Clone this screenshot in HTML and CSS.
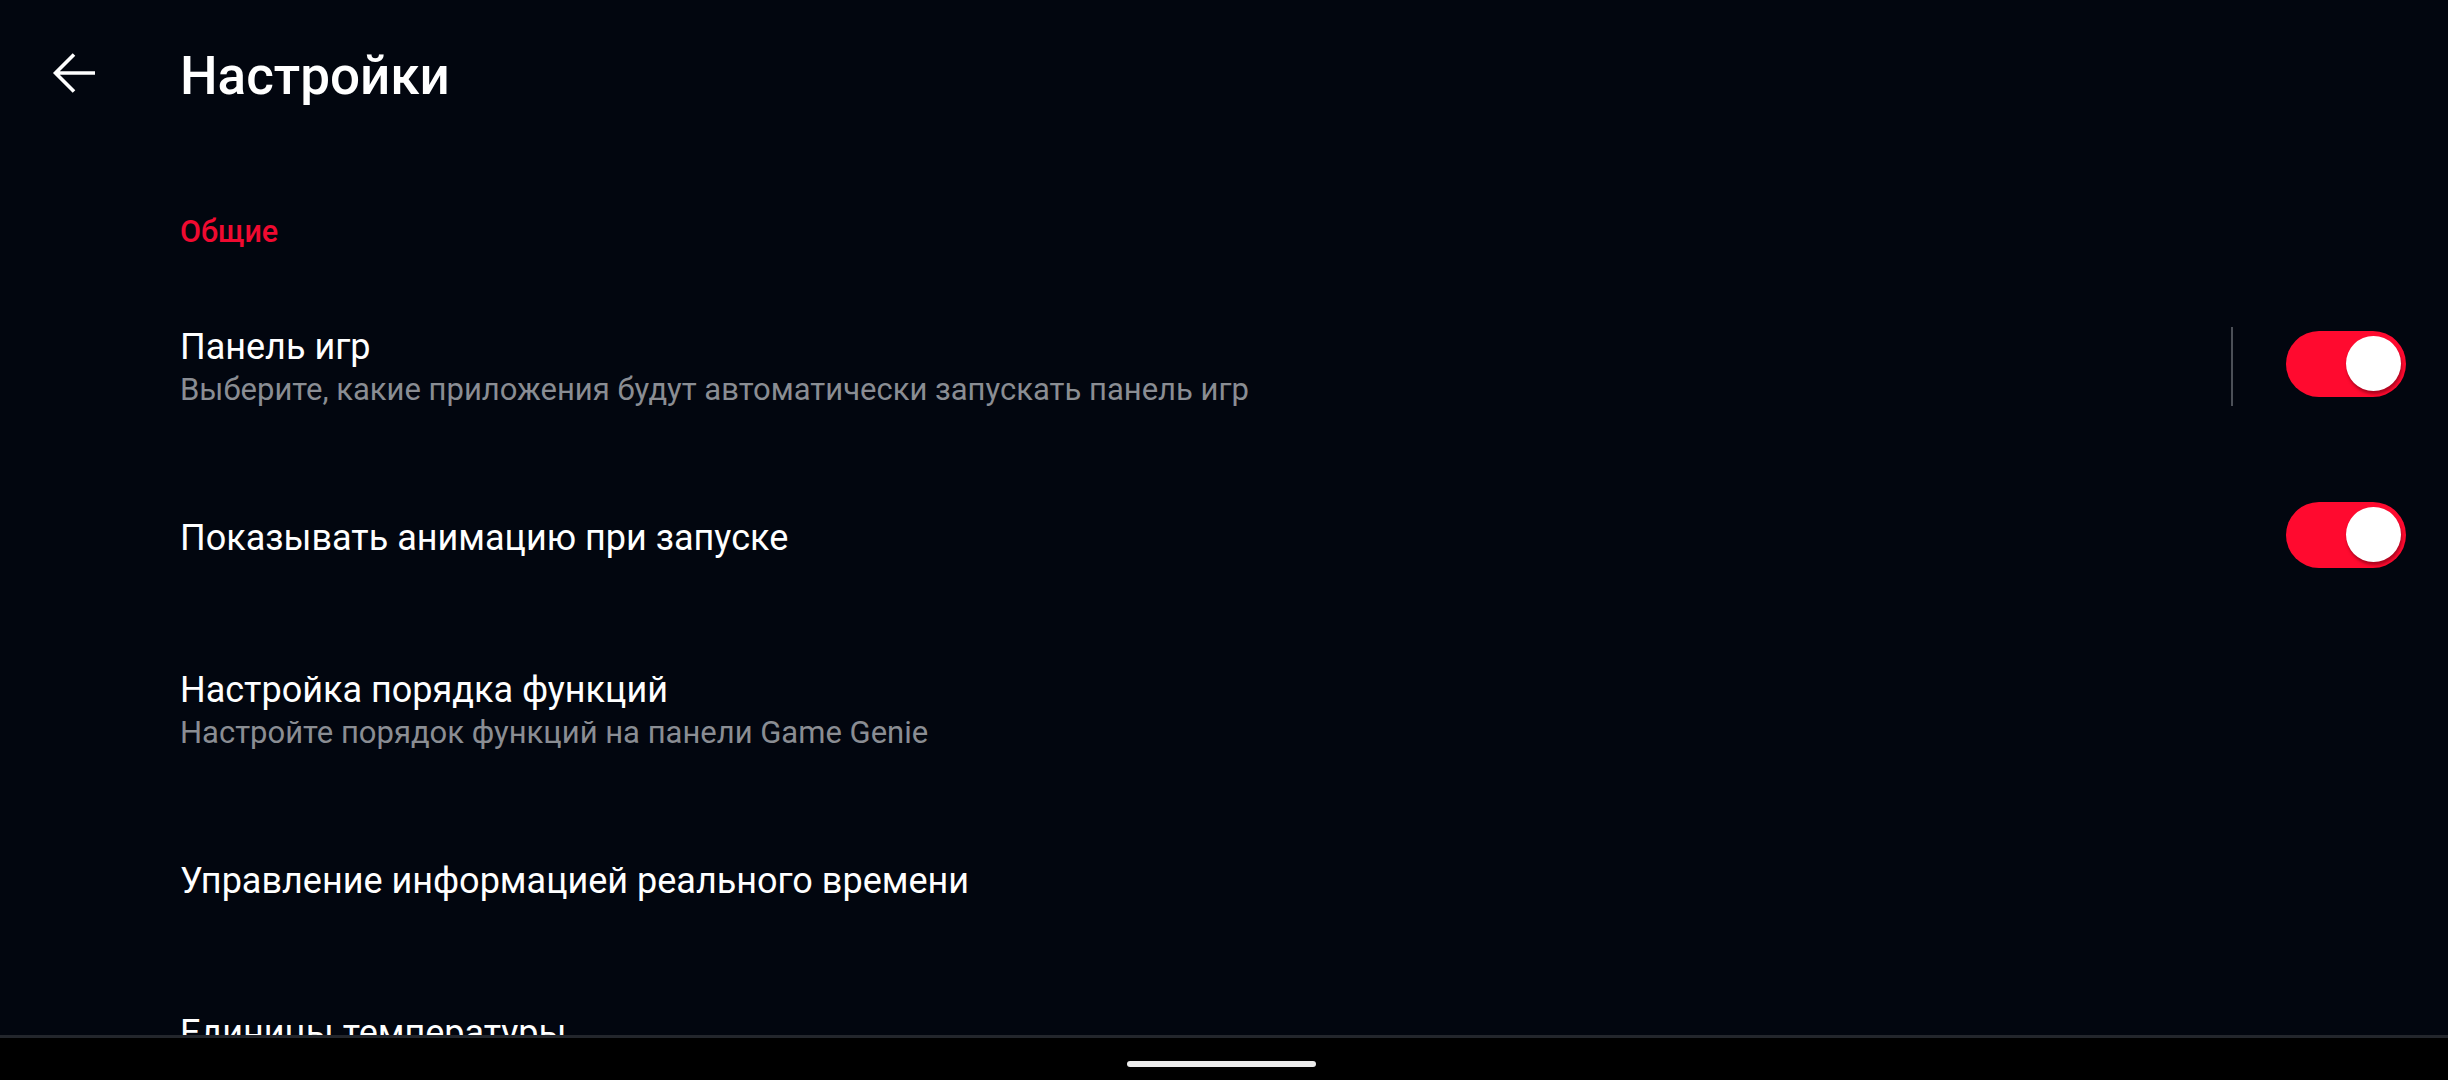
FILE: index.html
```html
<!DOCTYPE html>
<html lang="ru">
<head>
  <meta charset="UTF-8" />
  <meta name="viewport" content="width=device-width, initial-scale=1.0" />
  <title>Настройки</title>
  <link rel="stylesheet" href="styles.css">
</head>
<body>
  <div class="screen">
    <div class="content">
      <header class="toolbar">
        <button class="back-btn" aria-label="Назад">
          <svg width="44" height="44" viewBox="0 0 44 44">
            <path d="M43 22H4 M22 3.5 L3.5 22 L22 40.5" fill="none" stroke="#fff" stroke-width="3.6" />
          </svg>
        </button>
        <h1 class="title">Настройки</h1>
      </header>

      <div class="category">Общие</div>

      <div class="row">
        <div class="row-text">
          <div class="row-title">Панель игр</div>
          <div class="row-sub">Выберите, какие приложения будут автоматически запускать панель игр</div>
        </div>
        <div class="row-divider"></div>
        <div class="switch on"><span class="thumb"></span></div>
      </div>

      <div class="row">
        <div class="row-text">
          <div class="row-title">Показывать анимацию при запуске</div>
        </div>
        <div class="switch on"><span class="thumb"></span></div>
      </div>

      <div class="row">
        <div class="row-text">
          <div class="row-title">Настройка порядка функций</div>
          <div class="row-sub">Настройте порядок функций на панели Game Genie</div>
        </div>
      </div>

      <div class="row">
        <div class="row-text">
          <div class="row-title">Управление информацией реального времени</div>
        </div>
      </div>

      <div class="row">
        <div class="row-text">
          <div class="row-title">Единицы температуры</div>
          <div class="row-sub">Цельсий (°C)</div>
        </div>
      </div>
    </div>

    <div class="nav-bar">
      <div class="home-pill"></div>
    </div>
  </div>
</body>
</html>
```

FILE: styles.css
```css
body {
  margin: 0;
  padding: 0;
  background: #000;
  font-family: Roboto, "Noto Sans", Arial, sans-serif;
  color: #fff;
  overflow: hidden;
}

.screen {
  width: 2448px;
  height: 1080px;
  display: flex;
  flex-direction: column;
}

.content {
  height: 1035px;
  overflow: hidden;
  background: #02060f;
}

/* top bar */
.toolbar {
  height: 150px;
  display: flex;
  align-items: center;
  padding-left: 52px;
}

.back-btn {
  width: 44px;
  height: 44px;
  padding: 0;
  border: none;
  background: none;
  display: flex;
  margin-top: -4px;
}

.title {
  margin: 2px 0 0 84px;
  font-size: 53px;
  font-weight: 500;
  line-height: 64px;
}

/* list */
.category {
  padding: 62px 0 29px 180px;
  line-height: 40px;
  font-size: 30.5px;
  font-weight: 500;
  color: #f00a30;
}

.row {
  height: 171.5px;
  display: flex;
  align-items: center;
  padding: 0 42px 0 180px;
}

.row-text {
  flex: 1;
}

.row-title {
  font-size: 36px;
  line-height: 48px;
  color: #fff;
}

.row-sub {
  margin-top: -2px;
  font-size: 31px;
  line-height: 42px;
  color: #8a8d93;
}

.row-divider {
  width: 2px;
  height: 79px;
  background: #4b4f57;
  margin-right: 53px;
}

.switch {
  width: 120px;
  height: 66px;
  border-radius: 33px;
  background: #ff0a2f;
  position: relative;
  margin-top: -6px;
}

.switch .thumb {
  position: absolute;
  top: 5px;
  right: 5px;
  width: 55px;
  height: 55px;
  border-radius: 50%;
  background: #fff;
  box-shadow: 1px 3px 3px rgba(120, 0, 20, 0.6);
}

/* system navigation */
.nav-bar {
  flex: 1;
  border-top: 3px solid #23262c;
  background: #000;
  display: flex;
  justify-content: center;
  padding: 23px 6px 0 0;
}

.home-pill {
  width: 189px;
  height: 6px;
  border-radius: 3px;
  background: #ececec;
}
```
